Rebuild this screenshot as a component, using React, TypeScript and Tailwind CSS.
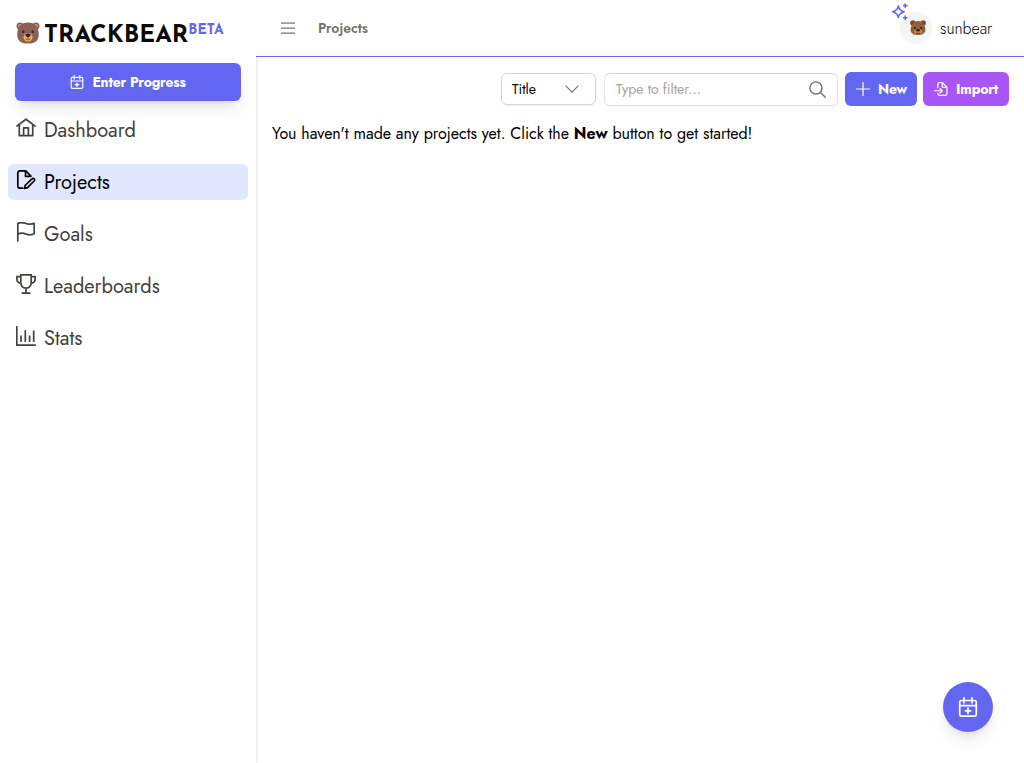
import type { ReactNode } from 'react';

type IconProps = { className?: string; children?: ReactNode };

function Icon({ className = '', children }: IconProps) {
  return (
    <svg viewBox="0 0 20 20" fill="none" stroke="currentColor" strokeWidth="1.7" strokeLinecap="round" strokeLinejoin="round" className={`shrink-0 ${className}`}>
      {children}
    </svg>
  );
}

const HomeIcon = () => (
  <Icon className="size-5"><path d="M.9 8.100 10 1.200l9.100 6.900M3.300 7v10.700h13.400V7M7.600 17.500V9.800h4.800v7.700" /></Icon>
);
const FileEditIcon = () => (
  <Icon className="size-5"><path d="M6.600 18.200H4a2.200 2.200 0 0 1-2.200-2.200V3A2.200 2.200 0 0 1 4 .8h5.700l5.200 5.400M9.500 1v5.300h5.200M16 8.900a1.450 1.450 0 0 1 2.100 2.100l-6.600 6.700-3 .7.6-2.900Z" /></Icon>
);
const FlagIcon = () => (
  <Icon className="size-5"><path d="M1.800 19V1.500c3.200-1.600 5.300-1.100 8.100 0 2.900 1.100 5.400.9 8.300-.2v10.500c-2.900 1.300-5.300 1.400-8.300.2-2.800-1.100-4.900-1.400-8.100.2" /></Icon>
);
const TrophyIcon = () => (
  <Icon className="size-5"><path d="M4.800.8h10.400v7.500c0 3.600-2 5.800-5.200 5.800s-5.200-2.200-5.200-5.800ZM10 14.100V19M6.300 19.200h7.400M4.800 2.600H.9v2.400c0 2.600 1.500 4 4 4.200M15.200 2.600h3.900v2.400c0 2.600-1.500 4-4 4.200" /></Icon>
);
const ChartIcon = () => (
  <Icon className="size-5"><path d="M.8.8v18.400h18.400M5 10.200v5M9.300 4.800v10.400M13.600 10.200v5M17.700 5v10.200" /></Icon>
);
const CalendarPlusIcon = ({ className }: IconProps) => (
  <Icon className={className}><path d="M3.500 3.500h13a1.800 1.800 0 0 1 1.800 1.800v12a1.800 1.800 0 0 1-1.800 1.800h-13a1.800 1.800 0 0 1-1.800-1.800v-12a1.800 1.800 0 0 1 1.800-1.800ZM1.700 8.600h16.600M6 .8v5M14 .8v5M10 11.200v5.200M7.400 13.800h5.200" /></Icon>
);
const ImportIcon = () => (
  <Icon className="size-[14px]"><path d="M5.500 8.200V3.200A2.200 2.200 0 0 1 7.700 1H12l6.500 6.500v9.300a2.200 2.200 0 0 1-2.200 2.200H7.700a2.200 2.200 0 0 1-2.200-2.200v-.6M11.800 1.200v6.300h6.500M.8 12.500h10.800M8.600 9.300l3.200 3.200-3.200 3.200" /></Icon>
);
const SparklesIcon = () => (
  <Icon className="size-[18px]"><path d="M8.200 3.200c.8 4.100 2.300 5.700 6.500 6.500-4.200.8-5.700 2.400-6.500 6.500-.8-4.100-2.300-5.700-6.500-6.500 4.200-.8 5.700-2.400 6.500-6.500ZM15.800 1v3.800M13.900 2.900h3.800M15.800 14.400v3.800M13.900 16.300h3.800" /></Icon>
);

function BrandBear() {
  return (
    <svg viewBox="0 0 24 24" className="mt-px size-6 shrink-0">
      <circle cx="4.100" cy="5" r="3.600" fill="#8d6055" /><circle cx="19.900" cy="5" r="3.600" fill="#8d6055" />
      <circle cx="4" cy="5" r="1.900" fill="#c49a83" /><circle cx="20" cy="5" r="1.900" fill="#c49a83" />
      <path d="M12 1.600c6.400 0 10 4 10.700 10.300.8 6.900-3.200 10.700-10.700 10.700S.5 18.800 1.300 11.900C2 5.600 5.600 1.600 12 1.600Z" fill="#8b6055" />
      <ellipse cx="12" cy="16.200" rx="4.500" ry="4.300" fill="#f3ae55" />
      <ellipse cx="7.300" cy="10.800" rx="1.100" ry="1.300" fill="#29252b" /><ellipse cx="16.700" cy="10.800" rx="1.100" ry="1.300" fill="#29252b" />
      <path d="M9.400 14c0-2 5.200-2 5.200 0 0 1.200-1.500 2.200-2.600 2.200s-2.600-1-2.600-2.200Z" fill="#29252b" />
      <path d="M12 16v2M9.400 17.800c1.200 1.400 4 1.400 5.200 0" fill="none" stroke="#5b3c32" strokeWidth=".8" />
    </svg>
  );
}

function AvatarBear() {
  return (
    <svg viewBox="0 0 18 18" className="mb-px size-[18px]">
      <circle cx="3.800" cy="4" r="2.700" fill="#85512f" /><circle cx="14.200" cy="4" r="2.700" fill="#85512f" />
      <circle cx="3.800" cy="4" r="1.300" fill="#5f3c26" /><circle cx="14.200" cy="4" r="1.300" fill="#5f3c26" />
      <path d="M9 1.900c4.700 0 6.500 3.500 7.300 7.300.9 4.300-2.100 6.900-7.300 6.900S.8 13.500 1.700 9.200C2.500 5.400 4.300 1.900 9 1.900Z" fill="#94603a" />
      <ellipse cx="9" cy="12.600" rx="3.700" ry="2.900" fill="#b98f69" />
      <circle cx="5.800" cy="9" r=".9" fill="#24150f" /><circle cx="12.200" cy="9" r=".9" fill="#24150f" />
      <ellipse cx="9" cy="11.300" rx="1.900" ry="1.300" fill="#2b1a13" />
      <path d="M7 14c1 .7 3 .7 4 0" stroke="#513322" fill="none" />
    </svg>
  );
}

const navItems = [
  { label: 'Dashboard', icon: <HomeIcon /> },
  { label: 'Projects', icon: <FileEditIcon />, active: true },
  { label: 'Goals', icon: <FlagIcon /> },
  { label: 'Leaderboards', icon: <TrophyIcon /> },
  { label: 'Stats', icon: <ChartIcon /> },
];

function Sidebar() {
  return (
    <aside className="flex w-64 shrink-0 flex-col shadow-[1px_0_3px_rgba(0,0,0,0.12)]">
      <div className="flex h-[63px] items-start pl-4 pt-5 font-['Josefin_Sans','Jost',sans-serif]">
        <BrandBear />
        <span className="ml-1 pt-1 text-2xl leading-6 font-bold text-[#0c0a09]">TRACKBEAR</span>
        <span className="pt-[3px] text-sm leading-4 font-bold text-[#6366f1]">BETA</span>
      </div>
      <button className="mx-[15px] flex h-[38px] shrink-0 items-center justify-center gap-2 rounded-md bg-[#6366f1] text-sm font-bold text-white shadow-lg">
        <CalendarPlusIcon className="size-[14px]" />
        <span className="tracking-[-0.2px]">Enter Progress</span>
      </button>
      <nav className="flex flex-col gap-4 px-2 pt-[11px]">
        {navItems.map((item) => (
          <a key={item.label} className={`flex h-9 items-center gap-2 rounded-md px-2 text-xl ${item.active ? 'bg-[#e0e7ff] text-black' : 'text-[#44403c]'}`}>
            <span className="pb-1">{item.icon}</span>
            <span className="pt-0.5">{item.label}</span>
          </a>
        ))}
      </nav>
    </aside>
  );
}

export default function App() {
  return (
    <div className="flex h-[763px] w-[1024px] overflow-hidden bg-white font-['Jost','Lato',sans-serif] whitespace-nowrap text-black antialiased">
      <Sidebar />
      <div className="flex min-w-0 flex-1 flex-col">
        <header className="z-10 flex h-[57px] shrink-0 items-center border-b border-[#6366f1] bg-white pr-8 pl-[25px]">
          <Icon className="size-[14px] text-[#78716c]"><path d="M.3 3h19.400M.3 10.200h19.400M.3 17.400h19.400" /></Icon>
          <span className="ml-[23px] text-sm font-semibold text-[#78716c]">Projects</span>
          <div className="ml-auto flex items-center gap-2">
            <div className="relative flex size-8 items-center justify-center rounded-full bg-[#f5f5f4] pl-[3px]">
              <AvatarBear />
              <span className="absolute -top-[9px] -left-[9px] text-[#6366f1]"><SparklesIcon /></span>
            </div>
            <span className="w-[52px] pt-0.5 text-base font-light">sunbear</span>
          </div>
        </header>
        <main className="flex-1 px-4 pt-[15px]">
          <div className="-mr-px flex h-[34px] items-start justify-end">
            <button className="mt-px mr-2 flex h-8 w-[95px] items-center justify-between rounded-md border border-[#d6d3d1] pr-4 pl-2.5 text-sm shadow-xs">
              Title
              <Icon className="size-[14px] text-[#78716c]"><path d="m1.500 6 8.500 8.500L18.500 6" /></Icon>
            </button>
            <label className="mt-px mr-[7px] flex h-[33px] w-[234px] items-center justify-between rounded-md border border-[#e7e5e4] border-t-[#d6d3d1] pr-[11px] pl-[11px] shadow-xs">
              <input placeholder="Type to filter..." className="w-40 pb-0.5 text-sm outline-none placeholder:text-[#a8a29e]" />
              <Icon className="size-[17px] text-[#78716c]"><circle cx="8.200" cy="8.200" r="7.200" /><path d="m13.500 13.500 5.700 5.700" /></Icon>
            </label>
            <button className="mr-1.5 flex h-[34px] w-[72px] items-center rounded-md bg-[#6366f1] pl-[11px] text-sm font-bold text-white">
              <Icon className="size-[14px]"><path d="M10 .7v18.600M.7 10h18.600" /></Icon>
              <span className="ml-2 tracking-[-0.2px]">New</span>
            </button>
            <button className="flex h-[34px] w-[86px] items-center rounded-md bg-[#a855f7] pl-[11px] text-sm font-bold text-white">
              <ImportIcon />
              <span className="ml-2 tracking-[-0.15px]">Import</span>
            </button>
          </div>
          <p className="mt-4 text-base">You haven't made any projects yet. Click the <strong className="font-bold">New</strong> button to get started!</p>
        </main>
      </div>
      <button className="absolute top-[682px] left-[943px] flex size-[50px] items-center justify-center rounded-full bg-[#6366f1] text-white shadow-lg">
        <CalendarPlusIcon className="size-5" />
      </button>
    </div>
  );
}
